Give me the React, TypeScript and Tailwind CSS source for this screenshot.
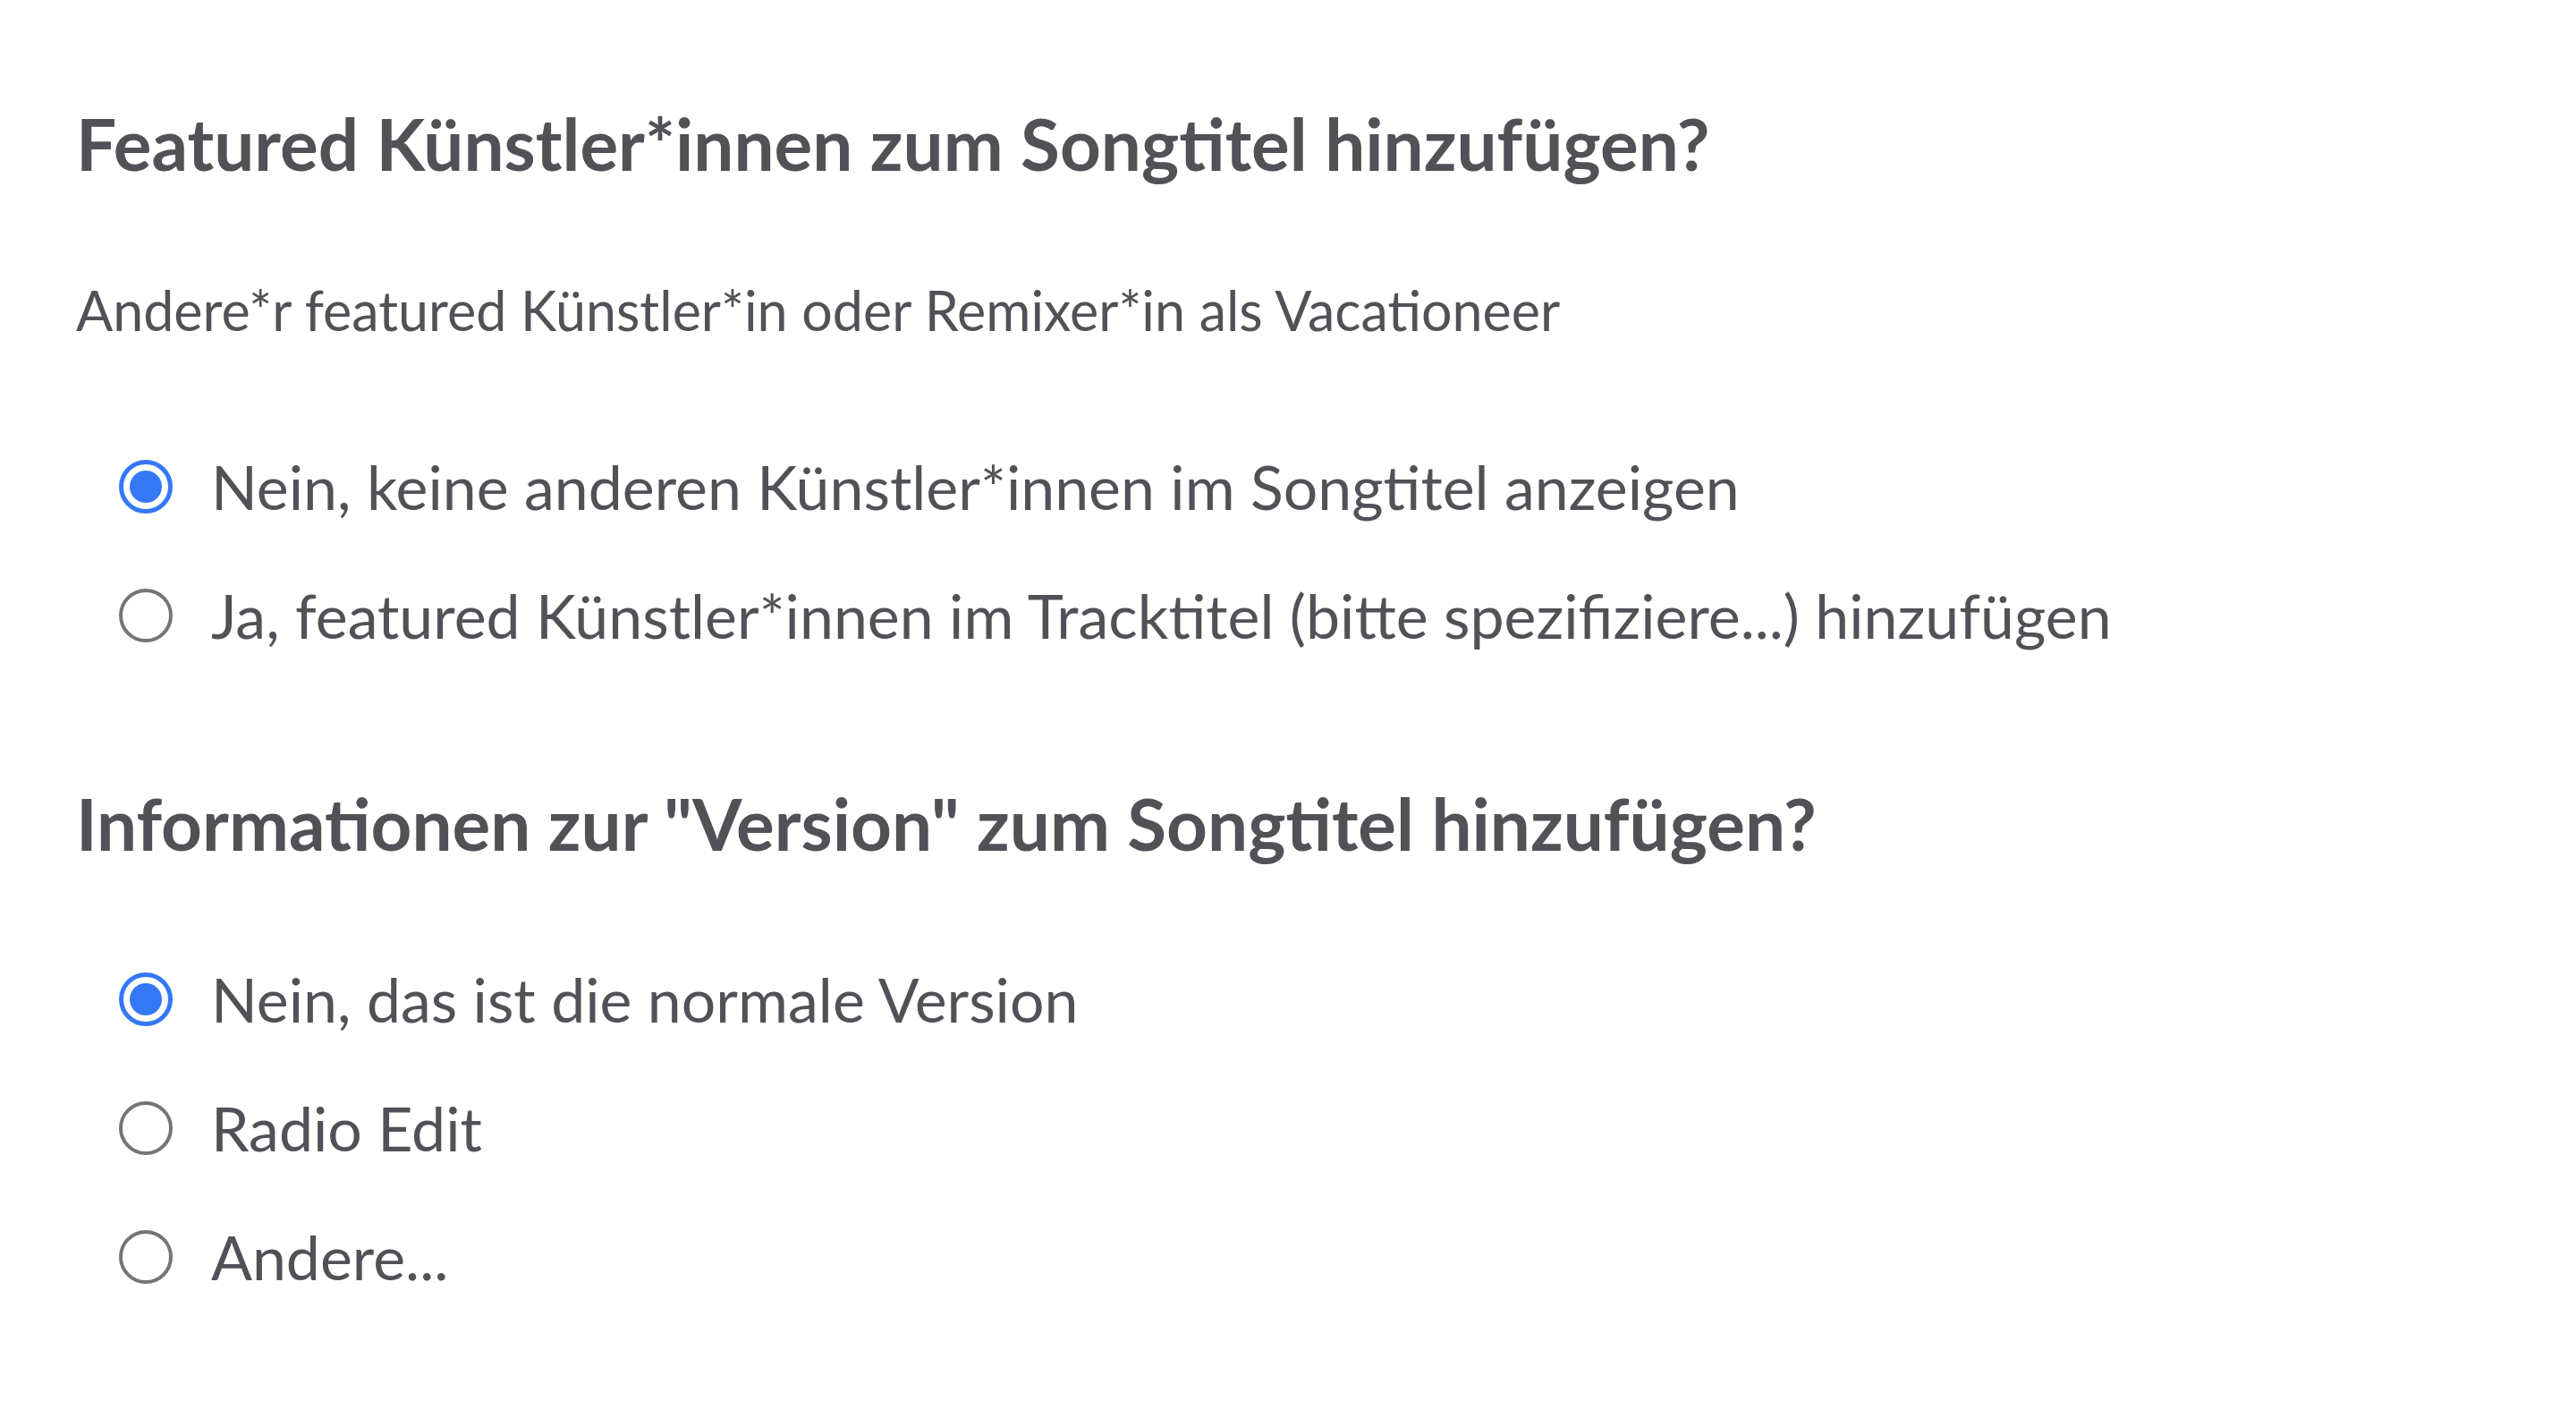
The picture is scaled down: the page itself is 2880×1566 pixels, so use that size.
import { useState } from "react";

type Option = { value: string; label: string };

const featuredOptions: Option[] = [
  { value: "none", label: "Nein, keine anderen Künstler*innen im Songtitel anzeigen" },
  { value: "featured", label: "Ja, featured Künstler*innen im Tracktitel (bitte spezifiziere...) hinzufügen" },
];

const versionOptions: Option[] = [
  { value: "normal", label: "Nein, das ist die normale Version" },
  { value: "radio", label: "Radio Edit" },
  { value: "other", label: "Andere..." },
];

function RadioRow({
  name,
  option,
  checked,
  onSelect,
}: {
  name: string;
  option: Option;
  checked: boolean;
  onSelect: () => void;
}) {
  return (
    <label className="flex h-[144px] cursor-pointer items-center">
      <input
        type="radio"
        name={name}
        value={option.value}
        checked={checked}
        onChange={onSelect}
        className="sr-only"
      />
      {/* custom radio circle */}
      <span
        className={
          checked
            ? "ml-[48px] flex h-[60px] w-[60px] shrink-0 items-center justify-center rounded-full border-[5px] border-[#3478f6]"
            : "ml-[48px] flex h-[60px] w-[60px] shrink-0 items-center justify-center rounded-full border-[4.5px] border-[#757575]"
        }
      >
        {checked && <span className="h-[36px] w-[36px] rounded-full bg-[#3478f6]" />}
      </span>
      <span className="ml-[43px] text-[68px] leading-[84px] text-[#505257]">{option.label}</span>
    </label>
  );
}

export default function App() {
  const [featured, setFeatured] = useState<string>("none");
  const [version, setVersion] = useState<string>("normal");

  return (
    <div
      className="min-h-screen bg-white pl-[85px] pt-[113px]"
      style={{ fontFamily: "Lato, 'Open Sans', sans-serif" }}
    >
      {/* featured artists */}
      <h2 className="text-[80px] font-bold leading-[94px] text-[#505257]">
        Featured Künstler*innen zum Songtitel hinzufügen?
      </h2>
      <p className="mt-[104px] text-[61px] leading-[72px] text-[#505257]">
        Andere*r featured Künstler*in oder Remixer*in als Vacationeer
      </p>
      <div className="mt-[89px] flex flex-col">
        {featuredOptions.map((o) => (
          <RadioRow
            key={o.value}
            name="featured"
            option={o}
            checked={featured === o.value}
            onSelect={() => setFeatured(o.value)}
          />
        ))}
      </div>

      {/* version */}
      <h2 className="mt-[113px] text-[80px] font-bold leading-[94px] text-[#505257]">
        Informationen zur "Version" zum Songtitel hinzufügen?
      </h2>
      <div className="mt-[78px] flex flex-col">
        {versionOptions.map((o) => (
          <RadioRow
            key={o.value}
            name="version"
            option={o}
            checked={version === o.value}
            onSelect={() => setVersion(o.value)}
          />
        ))}
      </div>
    </div>
  );
}
